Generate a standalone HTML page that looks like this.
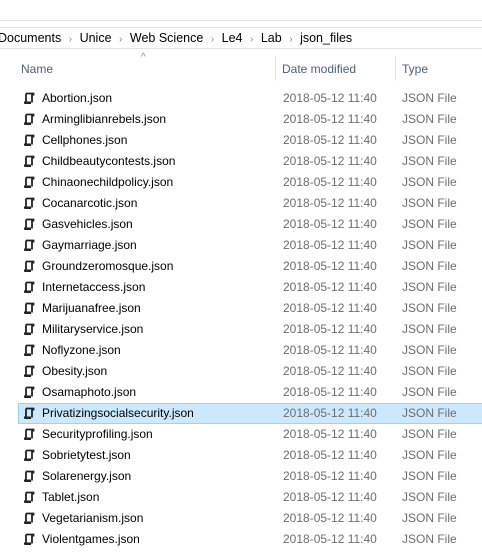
<!DOCTYPE html>
<html><head><style>
body{margin:0;width:482px;height:557px;background:#fff;font-family:"Liberation Sans",sans-serif;font-size:12px;color:#000;position:relative;overflow:hidden}
.l{position:absolute;left:0;width:482px;height:1px;background:#e3e3e3}
.bc{position:absolute;top:31px;left:-2px;font-size:12.5px;color:#000;white-space:nowrap}
.bc .s{color:#888;margin:0 7.5px;font-size:10px}
.hd{position:absolute;top:62px;font-size:12px;color:#4c607a}
.sep{position:absolute;top:56px;width:1px;height:25px;background:#e5e5e5}
.row{position:absolute;left:18px;width:470px;height:21px;line-height:21px}
.row.sel{background:#cce8ff;box-shadow:inset 0 0 0 1px #99d1ff}
.row .n{position:absolute;left:24px}
.row .d{position:absolute;left:265px;color:#6d6d6d}
.row .t{position:absolute;left:384px;color:#6d6d6d}
.row svg{position:absolute;left:5px;top:4px}
</style></head><body>
<div class="l" style="top:20px"></div>
<div class="l" style="top:27px"></div>
<div class="l" style="top:48px"></div>
<div class="bc">Documents<span class="s">›</span>Unice<span class="s">›</span>Web Science<span class="s">›</span>Le4<span class="s">›</span>Lab<span class="s">›</span>json_files</div>
<div style="position:absolute;left:141px;top:52px;color:#888;font-size:10px">^</div>
<div class="hd" style="left:21px">Name</div>
<div class="hd" style="left:282px">Date modified</div>
<div class="hd" style="left:402px">Type</div>
<div class="sep" style="left:275px"></div>
<div class="sep" style="left:395px"></div>
<div id="rows"></div>
<script>
var f=["Abortion","Arminglibianrebels","Cellphones","Childbeautycontests","Chinaonechildpolicy","Cocanarcotic","Gasvehicles","Gaymarriage","Groundzeromosque","Internetaccess","Marijuanafree","Militaryservice","Noflyzone","Obesity","Osamaphoto","Privatizingsocialsecurity","Securityprofiling","Sobrietytest","Solarenergy","Tablet","Vegetarianism","Violentgames"];
var h="";
f.forEach(function(n,i){
h+='<div class="row'+(i==15?' sel':'')+'" style="top:'+(88+i*21)+'px"><svg width="12" height="13" viewBox="0 0 12 13"><path d="M3 1.5h7.5v2M3 1.5v9.5M10.5 1.5h-1.5v9" fill="none" stroke="#222" stroke-width="1.8"/><path d="M1 9.5h7v2.5H2a1 1 0 0 1-1-1z" fill="#222"/></svg><span class="n">'+n+'.json</span><span class="d">2018-05-12 11:40</span><span class="t">JSON File</span></div>';
});
document.getElementById("rows").innerHTML=h;
</script>
</body></html>
